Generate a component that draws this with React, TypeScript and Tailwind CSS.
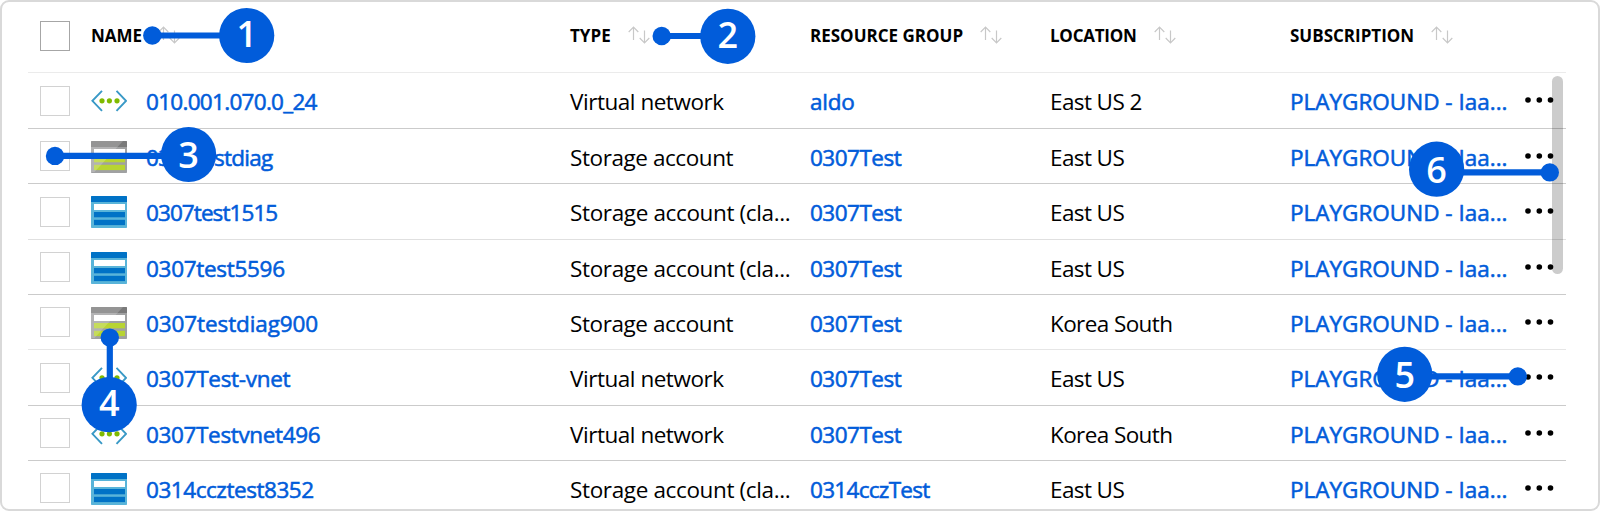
type Kind = "vnet" | "storage" | "classic";

interface Resource {
  kind: Kind;
  name: string;
  nameTracking: string;
  group: string;
  groupTracking: string;
  location: string;
  line: string;
  height: string;
}

const resources: Resource[] = [
  { kind: "vnet", name: "010.001.070.0_24", nameTracking: "tracking-[-0.7px]", group: "aldo", groupTracking: "tracking-[-0.2px]", location: "East US 2", line: "border-[#cbcbcb]", height: "h-[56px]" },
  { kind: "storage", name: "0307testdiag", nameTracking: "tracking-[-0.7px]", group: "0307Test", groupTracking: "tracking-[-0.5px]", location: "East US", line: "border-[#cbcbcb]", height: "h-[55px]" },
  { kind: "classic", name: "0307test1515", nameTracking: "tracking-[-0.92px]", group: "0307Test", groupTracking: "tracking-[-0.5px]", location: "East US", line: "border-[#e0e0e0]", height: "h-[56px]" },
  { kind: "classic", name: "0307test5596", nameTracking: "tracking-[-0.3px]", group: "0307Test", groupTracking: "tracking-[-0.5px]", location: "East US", line: "border-[#cbcbcb]", height: "h-[55px]" },
  { kind: "storage", name: "0307testdiag900", nameTracking: "tracking-[-0.1px]", group: "0307Test", groupTracking: "tracking-[-0.5px]", location: "Korea South", line: "border-[#e6e6e6]", height: "h-[55px]" },
  { kind: "vnet", name: "0307Test-vnet", nameTracking: "tracking-[-0.3px]", group: "0307Test", groupTracking: "tracking-[-0.5px]", location: "East US", line: "border-[#cbcbcb]", height: "h-[56px]" },
  { kind: "vnet", name: "0307Testvnet496", nameTracking: "tracking-[-0.35px]", group: "0307Test", groupTracking: "tracking-[-0.5px]", location: "Korea South", line: "border-[#cbcbcb]", height: "h-[55px]" },
  { kind: "classic", name: "0314ccztest8352", nameTracking: "tracking-[-0.45px]", group: "0314cczTest", groupTracking: "tracking-[-0.7px]", location: "East US", line: "border-transparent", height: "h-[55px]" },
];

const types: Record<Kind, { label: string; tracking: string }> = {
  vnet: { label: "Virtual network", tracking: "tracking-[-0.47px]" },
  storage: { label: "Storage account", tracking: "tracking-[-0.42px]" },
  classic: { label: "Storage account (cla...", tracking: "tracking-[-0.36px]" },
};

const columns = "grid grid-cols-[63px_479px_240px_240px_240px_276px]";

function ResourceIcon({ kind }: { kind: Kind }) {
  if (kind === "vnet") {
    return (
      <svg width="36" height="32" viewBox="0 0 36 32" fill="none">
        <path d="M11 5.8 1.4 15.8 11 25.8M25.5 5.8 35 15.8 25.5 25.8" stroke="#3999c6" strokeWidth="1.9" />
        <g fill="#7fba00">
          <circle cx="11" cy="15.8" r="2.6" />
          <circle cx="18.4" cy="15.8" r="2.6" />
          <circle cx="26" cy="15.8" r="2.6" />
        </g>
      </svg>
    );
  }
  const classic = kind === "classic";
  return (
    <svg width="36" height="32" viewBox="0 0 36 32">
      <rect width="36" height="32" rx="0.8" fill={classic ? "#59b4d9" : "#a0a1a2"} />
      <path d="M0 6V.8Q0 0 .8 0h34.4q.8 0 .8.8V6z" fill={classic ? "#0072c6" : "#7a7a7a"} />
      <rect x="3" y="8" width="31" height="6" fill="#fff" />
      <rect x="3" y="16" width="31" height="5.3" fill={classic ? "#0072c6" : "#b8d432"} />
      <rect x="3" y="23.8" width="31" height="5.3" fill={classic ? "#0072c6" : "#b8d432"} />
      {!classic && <path d="M0 0h32L3.5 31H0z" fill="#fff" fillOpacity=".2" />}
    </svg>
  );
}

function SortArrows() {
  return (
    <svg width="22" height="18" viewBox="0 0 22 18" fill="none" stroke="#c8c8c8" strokeWidth="1.2">
      <path d="M5.5 14V1.2M.7 6 5.5 1.2 10.3 6M16.5 4.5v12.3M11.7 12l4.8 4.8 4.8-4.8" />
    </svg>
  );
}

function HeaderCell({ label, tracking = "", gap = "gap-[17px]" }: { label: string; tracking?: string; gap?: string }) {
  return (
    <div className={`flex items-center ${gap}`}>
      <span className={`text-[17px] font-bold ${tracking}`}>{label}</span>
      <span className="-mt-px"><SortArrows /></span>
    </div>
  );
}

function Row({ item }: { item: Resource }) {
  const type = types[item.kind];
  const link = "text-[#015cda] [-webkit-text-stroke:0.55px_#015cda]";
  return (
    <div className={`${columns} ${item.height} shrink-0 items-center border-b text-[22.5px] ${item.line}`}>
      <span className="ml-3 size-[30px] border border-[#d2d2d2] bg-white" />
      <div className="flex items-center">
        <span className="mt-px"><ResourceIcon kind={item.kind} /></span>
        <span className={`ml-[19px] mt-[3px] ${link} ${item.nameTracking}`}>{item.name}</span>
      </div>
      <span className={`mt-[3px] ${type.tracking}`}>{type.label}</span>
      <span className={`mt-[3px] ${item.groupTracking} ${link}`}>{item.group}</span>
      <span className="mt-[3px] tracking-[-0.6px]">{item.location}</span>
      <div className="flex items-center">
        <span className={`mt-[3px] w-[234px] ${link}`}>PLAYGROUND - Iaa...</span>
        <svg className="mb-px" width="30" height="8" viewBox="0 0 30 8">
          <circle cx="4" cy="4" r="2.8" />
          <circle cx="15.3" cy="4" r="2.8" />
          <circle cx="26.5" cy="4" r="2.8" />
        </svg>
      </div>
    </div>
  );
}

const callouts = [
  { n: 1, x: 246.7, y: 35.5, dx: 152.3, dy: 35.5, base: 47.2 },
  { n: 2, x: 727.8, y: 36.3, dx: 661.7, dy: 36, base: 48.4 },
  { n: 3, x: 188.6, y: 154.5, dx: 55, dy: 155.9, base: 167.6 },
  { n: 4, x: 109.2, y: 404.7, dx: 109.8, dy: 337.6, base: 416 },
  { n: 5, x: 1404.7, y: 374.3, dx: 1517.8, dy: 376.4, base: 387.8 },
  { n: 6, x: 1436.6, y: 169.2, dx: 1549.8, dy: 172.4, base: 182.6 },
];

function Callouts() {
  return (
    <svg className="absolute inset-0" width="1600" height="511" viewBox="0 0 1600 511" fill="#015cda">
      {callouts.map((c) => (
        <g key={c.n}>
          <line x1={c.n === 4 ? c.dx : c.x} y1={c.n === 4 ? c.y : c.dy} x2={c.dx} y2={c.dy} stroke="#015cda" strokeWidth="6.2" />
          <circle cx={c.dx} cy={c.dy} r="9.2" />
          <circle cx={c.x} cy={c.y} r="27.6" />
          <text x={c.x} y={c.base} textAnchor="middle" fill="#fff" className="text-[36px] font-semibold">
            {c.n}
          </text>
        </g>
      ))}
    </svg>
  );
}

export default function App() {
  return (
    <div className="relative h-[511px] w-[1600px] overflow-hidden bg-white font-['Open_Sans','Noto_Sans',sans-serif] text-black">
      <div className="flex h-full flex-col overflow-hidden rounded-[9px] border-2 border-[#d9d9d9] pl-[26px] pr-8">
        <div className={`${columns} h-[71px] shrink-0 items-center border-b border-[#ebebeb] pb-[3px]`}>
          <span className="ml-3 size-[30px] border border-[#a6a6a6] bg-white" />
          <HeaderCell label="NAME" gap="gap-[16px]" />
          <HeaderCell label="TYPE" />
          <HeaderCell label="RESOURCE GROUP" />
          <HeaderCell label="LOCATION" tracking="tracking-[-0.25px]" />
          <HeaderCell label="SUBSCRIPTION" />
        </div>
        {resources.map((item) => (
          <Row key={item.name} item={item} />
        ))}
      </div>
      <div className="absolute left-[1552px] top-[76px] h-[198px] w-[11px] rounded-full bg-black/20" />
      <Callouts />
    </div>
  );
}
